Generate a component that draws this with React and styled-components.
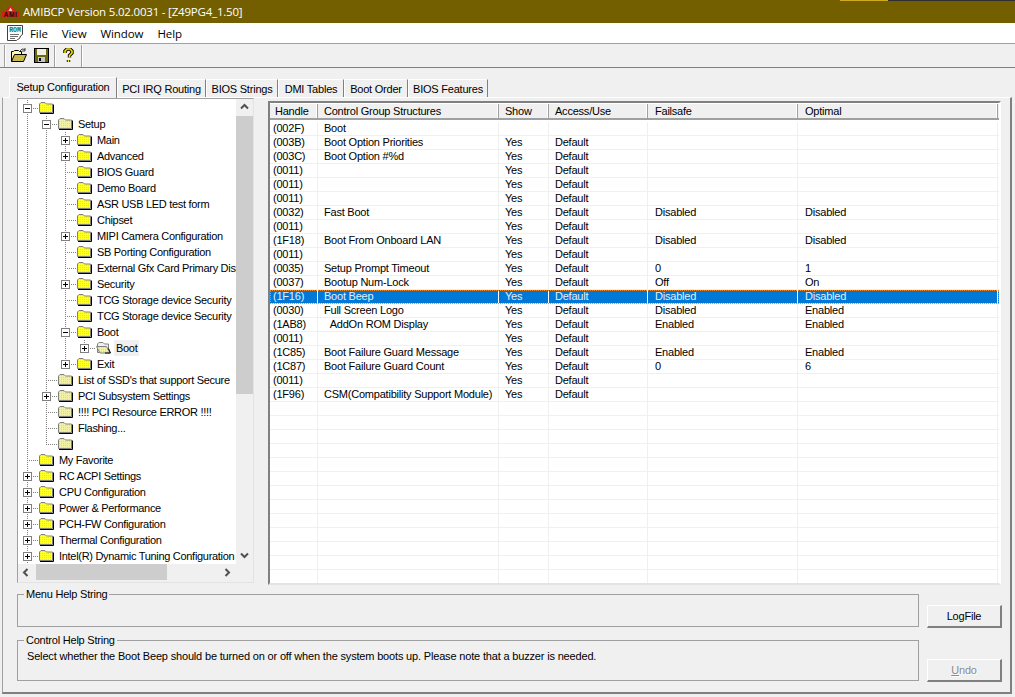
import styled, { createGlobalStyle } from 'styled-components';

const Global = createGlobalStyle`
  html, body { margin: 0; padding: 0; background: #f0f0f0; overflow: hidden; }
  body { font-family: 'Liberation Sans', Arial, sans-serif; font-size: 11px; letter-spacing: -0.22px; color: #000; }
  #root { width: 1015px; height: 697px; }
`;

const Window = styled.div`
  width: 1015px;
  height: 697px;
  display: flex;
  flex-direction: column;
  overflow: hidden;
  background: #f0f0f0;
`;

const TitleBar = styled.div`
  height: 23px;
  flex: none;
  display: flex;
  align-items: center;
  gap: 4px;
  padding-left: 2px;
  color: #fff;
  font-family: 'Open Sans', sans-serif;
  font-size: 11.5px;
  letter-spacing: -0.2px;
  background: linear-gradient(90deg, transparent 840px, #d0aa1c 840px 888px, #2e2e2e 888px) top / 100% 1px no-repeat, #745f00;
`;

const MenuBar = styled.div`
  height: 20px;
  flex: none;
  display: flex;
  align-items: center;
  background: #fff;
  padding-left: 7px;
`;

const MenuItem = styled.span`
  font-family: 'Open Sans', sans-serif;
  font-size: 11.5px;
  letter-spacing: -0.1px;
  margin-left: ${(p) => p.$gap}px;
`;

const ToolBar = styled.div`
  height: 23px;
  flex: none;
  display: flex;
  align-items: center;
  padding-left: 3px;
  border-top: 1px solid #a0a0a0;
  border-bottom: 1px solid #808080;
  background: #f0f0f0;
  box-sizing: content-box;
`;

const ToolSep = styled.span`
  width: 1px;
  height: 22px;
  margin: 0 1px;
  background: #a0a0a0;
  border-right: 1px solid #fff;
`;

const ToolBtn = styled.span`
  width: 23px;
  height: 22px;
  display: flex;
  align-items: center;
  justify-content: center;
`;

const Body = styled.div`
  flex: 1;
  display: flex;
  flex-direction: column;
  padding: 8px 3px 3px 2px;
  min-height: 0;
`;

const TabStrip = styled.div`
  display: flex;
  align-items: flex-end;
  height: 21px;
  flex: none;
  padding-left: 7px;
`;

const Tab = styled.div`
  height: ${(p) => (p.$active ? 21 : 18)}px;
  width: ${(p) => p.$w}px;
  padding-bottom: ${(p) => (p.$active ? 3 : 0)}px;
  box-sizing: border-box;
  display: flex;
  align-items: center;
  justify-content: center;
  white-space: nowrap;
  background: #f0f0f0;
  border-top: 1px solid #fff;
  border-left: 1px solid #fff;
  border-right: 1px solid #808080;
  margin-bottom: ${(p) => (p.$active ? -1 : 0)}px;
  position: relative;
  z-index: ${(p) => (p.$active ? 1 : 0)};
`;

const TabPanel = styled.div`
  flex: 1;
  min-height: 0;
  box-sizing: border-box;
  border-top: 1px solid #fff;
  border-left: 1px solid #a0a0a0;
  border-right: 2px solid #808080;
  border-bottom: 2px solid #808080;
  padding: 0 7px 0 14px;
  display: flex;
  flex-direction: column;
`;

const MainRow = styled.div`
  height: 487px;
  flex: none;
  display: flex;
  gap: 14px;
`;

const TreePanel = styled.div`
  width: 237px;
  height: 485px;
  flex: none;
  box-sizing: border-box;
  border: 1px solid #a0a0a0;
  border-right-color: #e3e3e3;
  border-bottom-color: #e3e3e3;
  display: grid;
  grid-template-columns: 218px 17px;
  grid-template-rows: 465px 17px;
  background: #f0f0f0;
`;

const TreeBody = styled.div`
  background: #fff;
  overflow: hidden;
  padding-top: 1px;
`;

const TreeRow = styled.div`
  height: 16px;
  display: flex;
  align-items: stretch;
  padding-left: 5px;
  white-space: nowrap;
  letter-spacing: -0.3px;
`;

const Guide = styled.span`
  width: 19px;
  flex: none;
  background: ${(p) => (p.$on ? 'repeating-linear-gradient(to bottom, #808080 0 1px, transparent 1px 2px) 4px 0 / 1px 100% no-repeat' : 'none')};
`;

const Node = styled.span`
  width: 16px;
  flex: none;
  display: flex;
  align-items: center;
  background:
    repeating-linear-gradient(to bottom, #808080 0 1px, transparent 1px 2px) 4px 0 / 1px ${(p) => (p.$last ? '8px' : '100%')} no-repeat,
    repeating-linear-gradient(to right, #808080 0 1px, transparent 1px 2px) 4px 8px / 12px 1px no-repeat;
`;

const Expander = styled.svg`
  display: block;
  margin-top: 1px;
  background: #fff;
`;

const FolderIcon = styled.svg`
  flex: none;
  align-self: center;
`;

const Label = styled.span`
  margin-left: 3px;
  padding: 0 2px;
  line-height: 16px;
  background: ${(p) => (p.$selected ? '#f0f0f0' : 'transparent')};
`;

const VScroll = styled.div`
  background: #f0f0f0;
  display: flex;
  flex-direction: column;
  align-items: center;
`;

const ScrollEnd = styled.span`
  width: 17px;
  height: 17px;
  flex: none;
  display: flex;
  align-items: center;
  justify-content: center;
`;

const VTrack = styled.div`
  flex: 1;
  width: 17px;
`;

const VThumb = styled.div`
  height: 278px;
  background: #cdcdcd;
`;

const HScroll = styled.div`
  background: #f0f0f0;
  display: flex;
`;

const HTrack = styled.div`
  flex: 1;
`;

const HThumb = styled.div`
  width: 131px;
  height: 16px;
  margin-left: 1px;
  background: #cdcdcd;
`;

const Corner = styled.div`
  background: #f0f0f0;
`;

const GridPanel = styled.div`
  width: 733px;
  height: 484px;
  flex: none;
  margin-top: 3px;
  box-sizing: border-box;
  border-top: 2px solid #808080;
  border-left: 2px solid #808080;
  border-right: 2px solid #fff;
  border-bottom: 2px solid #e3e3e3;
  background: #fff;
  overflow: hidden;
`;

const columns = '48px 181px 50px 99px 150px 200px';

const HeaderRow = styled.div`
  display: grid;
  grid-template-columns: ${columns};
  height: 16px;
  box-sizing: border-box;
  background: #f0f0f0;
  border-bottom: 2px solid #a0a0a0;
  margin-top: 1px;
`;

const HeaderCell = styled.div`
  padding-left: ${(p) => p.$pad}px;
  line-height: 14px;
  border-right: 1px solid #a0a0a0;
  box-shadow: inset -1px 0 0 #fff;
`;

const DataRow = styled.div`
  display: grid;
  grid-template-columns: ${columns};
  height: 14px;
  margin-top: ${(p) => (p.$first ? 2 : 0)}px;
  box-sizing: border-box;
  border-bottom: 1px solid #f0f0f0;
  background: ${(p) => (p.$selected ? '#0078d7' : '#fff')};
  color: ${(p) => (p.$selected ? '#e4eef8' : '#000')};
  outline: ${(p) => (p.$selected ? '1px dotted #f08a24' : 'none')};
  outline-offset: -1px;
`;

const DataCell = styled.div`
  padding-left: ${(p) => p.$pad}px;
  line-height: 13px;
  white-space: nowrap;
  overflow: hidden;
  border-right: 1px solid ${(p) => (p.$selected ? '#fff' : '#f0f0f0')};
`;

const HelpArea = styled.div`
  flex: 1;
  display: flex;
  gap: 8px;
  margin-top: 3px;
`;

const Groups = styled.div`
  width: 902px;
  flex: none;
  display: flex;
  flex-direction: column;
`;

const GroupBox = styled.fieldset`
  margin: 0;
  padding: 0 0 0 9px;
  box-sizing: border-box;
  height: ${(p) => p.$h}px;
  margin-bottom: ${(p) => p.$mb || 0}px;
  border: 1px solid #a0a0a0;
  min-width: 0;
  legend {
    padding: 0 2px;
    margin-left: -3px;
    line-height: 13px;
  }
`;

const HelpText = styled.div`
  margin-top: 2px;
  line-height: 14px;
  letter-spacing: -0.17px;
`;

const Buttons = styled.div`
  width: 75px;
  flex: none;
  display: flex;
  flex-direction: column;
  padding-top: 17px;
`;

const PushButton = styled.div`
  height: 23px;
  box-sizing: border-box;
  display: flex;
  align-items: center;
  justify-content: center;
  background: #f0f0f0;
  border-top: 1px solid #fff;
  border-left: 1px solid #fff;
  border-right: 2px solid #808080;
  border-bottom: 2px solid #808080;
  margin-bottom: ${(p) => p.$mb || 0}px;
  color: ${(p) => (p.$disabled ? '#8a8a8a' : '#000')};
  text-shadow: ${(p) => (p.$disabled ? '1px 1px 0 #fff' : 'none')};
  u { text-decoration: underline; }
`;

const FolderDefs = () => (
  <svg width="0" height="0" style={{ display: 'block', height: 0 }}>
    <defs>
      <pattern id="dither" width="2" height="2" patternUnits="userSpaceOnUse">
        <rect width="2" height="2" fill="#ffff20" />
        <rect width="1" height="1" fill="#f4f4a8" />
        <rect x="1" y="1" width="1" height="1" fill="#e0e070" />
      </pattern>
    </defs>
  </svg>
);

const Folder = ({ open }) =>
  open ? (
    <FolderIcon width="15" height="12" viewBox="0 0 15 12">
      <path d="M1.5 10.5V2L3 .5h4L8.5 2h4v8.5z" fill="#f0f0f0" stroke="#808080" />
      <path d="M.5 4.5h10l3.5 6.5H4z" fill="url(#dither)" stroke="#808080" />
      <path d="M12.5 6.5l2 4.5H9" fill="none" stroke="#000" />
    </FolderIcon>
  ) : (
    <FolderIcon width="15" height="12" viewBox="0 0 15 12">
      <path d="M.5 10.5V2L2 .5h4L7.5 2h6v8.5z" fill="url(#dither)" stroke="#808080" />
      <path d="M14.5 2.5v9H1" fill="none" stroke="#000" />
    </FolderIcon>
  );

const Box = ({ type }) => (
  <Expander width="9" height="9" viewBox="0 0 9 9">
    <rect x=".5" y=".5" width="8" height="8" fill="#fff" stroke="#808080" />
    <path d={type === '+' ? 'M2 4.5h5M4.5 2v5' : 'M2 4.5h5'} stroke="#000" />
  </Expander>
);

const Chevron = ({ dir }) => {
  const d = {
    up: 'M1 5.5L4.5 2 8 5.5',
    down: 'M1 2.5L4.5 6 8 2.5',
    left: 'M5.5 1L2 4.5 5.5 8',
    right: 'M2.5 1L6 4.5 2.5 8',
  }[dir];
  return (
    <svg width="9" height="9" viewBox="0 0 9 9">
      <path d={d} fill="none" stroke="#505050" strokeWidth="2" />
    </svg>
  );
};

// level, label, expander
const treeData = [
  [0, '', '-'],
  [1, 'Setup', '-'],
  [2, 'Main', '+'],
  [2, 'Advanced', '+'],
  [2, 'BIOS Guard'],
  [2, 'Demo Board'],
  [2, 'ASR USB LED test form'],
  [2, 'Chipset'],
  [2, 'MIPI Camera Configuration', '+'],
  [2, 'SB Porting Configuration'],
  [2, 'External Gfx Card Primary Disp'],
  [2, 'Security', '+'],
  [2, 'TCG Storage device Security'],
  [2, 'TCG Storage device Security'],
  [2, 'Boot', '-'],
  [3, 'Boot', '+', true],
  [2, 'Exit', '+'],
  [1, "List of SSD's that support Secure"],
  [1, 'PCI Subsystem Settings', '+'],
  [1, '!!!! PCI Resource ERROR !!!!'],
  [1, 'Flashing...'],
  [1, ''],
  [0, 'My Favorite'],
  [0, 'RC ACPI Settings', '+'],
  [0, 'CPU Configuration', '+'],
  [0, 'Power & Performance', '+'],
  [0, 'PCH-FW Configuration', '+'],
  [0, 'Thermal Configuration', '+'],
  [0, 'Intel(R) Dynamic Tuning Configuration', '+'],
];

// does a row at this index have a later sibling at this level
const hasNext = (index, level) => {
  for (let i = index + 1; i < treeData.length; i++) {
    if (treeData[i][0] < level) return false;
    if (treeData[i][0] === level) return true;
  }
  return level === 0;
};

const rows = [
  ['(002F)', 'Boot', '', '', '', ''],
  ['(003B)', 'Boot Option Priorities', 'Yes', 'Default', '', ''],
  ['(003C)', 'Boot Option #%d', 'Yes', 'Default', '', ''],
  ['(0011)', '', 'Yes', 'Default', '', ''],
  ['(0011)', '', 'Yes', 'Default', '', ''],
  ['(0011)', '', 'Yes', 'Default', '', ''],
  ['(0032)', 'Fast Boot', 'Yes', 'Default', 'Disabled', 'Disabled'],
  ['(0011)', '', 'Yes', 'Default', '', ''],
  ['(1F18)', 'Boot From Onboard LAN', 'Yes', 'Default', 'Disabled', 'Disabled'],
  ['(0011)', '', 'Yes', 'Default', '', ''],
  ['(0035)', 'Setup Prompt Timeout', 'Yes', 'Default', '0', '1'],
  ['(0037)', 'Bootup Num-Lock', 'Yes', 'Default', 'Off', 'On'],
  ['(1F16)', 'Boot Beep', 'Yes', 'Default', 'Disabled', 'Disabled'],
  ['(0030)', 'Full Screen Logo', 'Yes', 'Default', 'Disabled', 'Enabled'],
  ['(1AB8)', '  AddOn ROM Display', 'Yes', 'Default', 'Enabled', 'Enabled'],
  ['(0011)', '', 'Yes', 'Default', '', ''],
  ['(1C85)', 'Boot Failure Guard Message', 'Yes', 'Default', 'Enabled', 'Enabled'],
  ['(1C87)', 'Boot Failure Guard Count', 'Yes', 'Default', '0', '6'],
  ['(0011)', '', 'Yes', 'Default', '', ''],
  ['(1F96)', 'CSM(Compatibility Support Module)', 'Yes', 'Default', '', ''],
  ...Array.from({ length: 13 }, () => ['', '', '', '', '', '']),
];

const tabs = [
  ['Setup Configuration', 108],
  ['PCI IRQ Routing', 89],
  ['BIOS Strings', 72],
  ['DMI Tables', 66],
  ['Boot Order', 64],
  ['BIOS Features', 80],
];

const headers = ['Handle', 'Control Group Structures', 'Show', 'Access/Use', 'Failsafe', 'Optimal'];
const headerPad = [5, 6, 6, 6, 7, 7];
const cellPad = [3, 6, 6, 6, 7, 7];

const AppLogo = () => (
  <svg width="17" height="13" viewBox="0 0 17 13">
    <path d="M8.5 0L15 7H2z" fill="#d8201c" />
    <path d="M6.5 6L8.5 2.5l2 3.5z" fill="#f4c8b8" />
    <rect x="0" y="6" width="17" height="6" fill="#d02018" />
    <text x="8.5" y="11.5" textAnchor="middle" fontSize="6.5" fontWeight="700" fontFamily="Liberation Sans, sans-serif" letterSpacing="0.6" fill="#111">AMI</text>
  </svg>
);

const RomIcon = () => (
  <svg width="17" height="17" viewBox="0 0 17 17">
    <path d="M.5 15.5V.5h15v9l-2 1.5-1 2.5-2 1-1 1z" fill="#fff" stroke="#404040" />
    <rect x="2" y="1.5" width="12" height="6" fill="#e4f6f0" />
    <text x="8" y="7" textAnchor="middle" fontSize="6.5" fontWeight="700" fontFamily="Liberation Mono, monospace" letterSpacing="0" fill="#107868">ROM</text>
    <path d="M3 9.5h9M3 11.5h8M3 13.5h5" stroke="#707070" />
  </svg>
);

const OpenIcon = () => (
  <svg width="16" height="15" viewBox="0 0 16 15">
    <path d="M.5 13.5V3.5h2l1-1h4l1 1h2v3" fill="#fff8b0" stroke="#000" />
    <path d="M.5 13.5l3-7h12l-3 7z" fill="#c8b848" stroke="#000" />
    <path d="M9 3l2-2 3 .5M14 0v3h-3" fill="none" stroke="#404040" />
  </svg>
);

const SaveIcon = () => (
  <svg width="15" height="15" viewBox="0 0 15 15">
    <rect x=".5" y=".5" width="14" height="14" fill="#6a6a10" stroke="#000" />
    <rect x="3" y="1" width="9" height="6" fill="#f0f0e0" />
    <rect x="4" y="9" width="7" height="5" fill="#c8c8c8" />
    <rect x="5" y="10" width="2" height="3" fill="#000" />
  </svg>
);

const HelpIcon = () => (
  <svg width="11" height="15" viewBox="0 0 11 15">
    <path d="M2 5V3l2-2h3l2 2v2L6.5 7.5V9.5M5.5 12v2" fill="none" stroke="#000" strokeWidth="3.4" />
    <path d="M2 5V3l2-2h3l2 2v2L6.5 7.5V9.5M5.5 12v2" fill="none" stroke="#f8e800" strokeWidth="1.6" />
  </svg>
);

export default function App() {
  return (
    <Window>
      <Global />
      <FolderDefs />
      <TitleBar>
        <AppLogo />
        AMIBCP Version 5.02.0031 - [Z49PG4_1.50]
      </TitleBar>
      <MenuBar>
        <RomIcon />
        <MenuItem $gap={6}>File</MenuItem>
        <MenuItem $gap={14}>View</MenuItem>
        <MenuItem $gap={14}>Window</MenuItem>
        <MenuItem $gap={14}>Help</MenuItem>
      </MenuBar>
      <ToolBar>
        <ToolSep />
        <ToolBtn><OpenIcon /></ToolBtn>
        <ToolBtn><SaveIcon /></ToolBtn>
        <ToolSep />
        <ToolBtn><HelpIcon /></ToolBtn>
        <ToolSep />
      </ToolBar>
      <Body>
        <TabStrip>
          {tabs.map(([name, w], i) => (
            <Tab key={name} $active={i === 0} $w={w}>{name}</Tab>
          ))}
        </TabStrip>
        <TabPanel>
          <MainRow>
            <TreePanel>
              <TreeBody>
                {treeData.map(([level, label, exp, selected], i) => (
                  <TreeRow key={i}>
                    {Array.from({ length: level }, (_, j) => (
                      <Guide key={j} $on={hasNext(i, j)} />
                    ))}
                    <Node $last={!hasNext(i, level)}>
                      {exp ? <Box type={exp} /> : null}
                    </Node>
                    <Folder open={selected} />
                    {label ? <Label $selected={selected}>{label}</Label> : null}
                  </TreeRow>
                ))}
              </TreeBody>
              <VScroll>
                <ScrollEnd><Chevron dir="up" /></ScrollEnd>
                <VTrack><VThumb /></VTrack>
                <ScrollEnd><Chevron dir="down" /></ScrollEnd>
              </VScroll>
              <HScroll>
                <ScrollEnd><Chevron dir="left" /></ScrollEnd>
                <HTrack><HThumb /></HTrack>
                <ScrollEnd><Chevron dir="right" /></ScrollEnd>
              </HScroll>
              <Corner />
            </TreePanel>
            <GridPanel>
              <HeaderRow>
                {headers.map((h, j) => <HeaderCell key={h} $pad={headerPad[j]}>{h}</HeaderCell>)}
              </HeaderRow>
              {rows.map((row, i) => {
                const selected = row[0] === '(1F16)';
                return (
                  <DataRow key={i} $first={i === 0} $selected={selected}>
                    {row.map((cell, j) => (
                      <DataCell key={j} $selected={selected} $pad={cellPad[j]}>
                        {cell.startsWith('  ') ? <>&nbsp;&nbsp;{cell.trim()}</> : cell}
                      </DataCell>
                    ))}
                  </DataRow>
                );
              })}
            </GridPanel>
          </MainRow>
          <HelpArea>
            <Groups>
              <GroupBox $h={39} $mb={7}>
                <legend>Menu Help String</legend>
              </GroupBox>
              <GroupBox $h={47}>
                <legend>Control Help String</legend>
                <HelpText>Select whether the Boot Beep should be turned on or off when the system boots up. Please note that a buzzer is needed.</HelpText>
              </GroupBox>
            </Groups>
            <Buttons>
              <PushButton $mb={31}>LogFile</PushButton>
              <PushButton $disabled><span><u>U</u>ndo</span></PushButton>
            </Buttons>
          </HelpArea>
        </TabPanel>
      </Body>
    </Window>
  );
}
